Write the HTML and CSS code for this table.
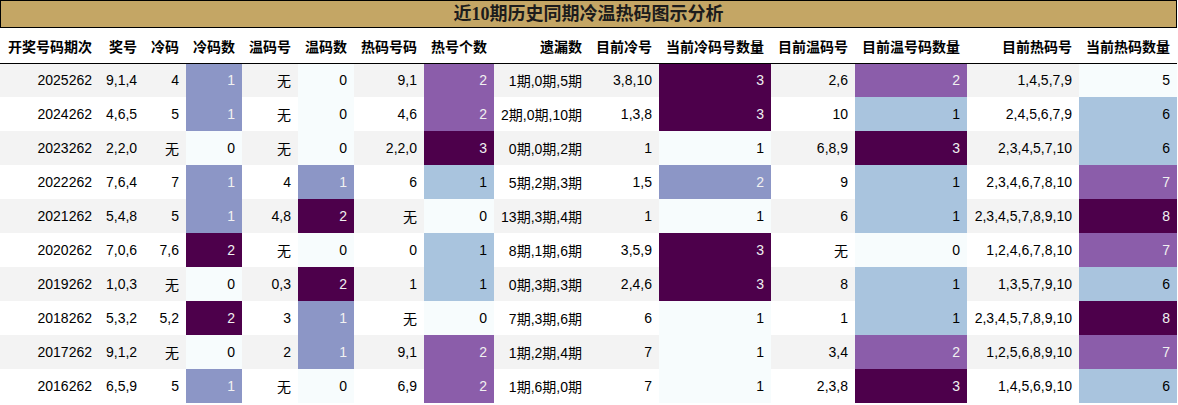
FILE: index.html
```html
<!DOCTYPE html>
<html lang="zh">
<head>
<meta charset="utf-8">
<title>近10期历史同期冷温热码图示分析</title>
<link rel="stylesheet" href="styles.css">
</head>
<body>
<div class="wrap">
  <div class="title">近10期历史同期冷温热码图示分析</div>
  <table class="grid">
    <colgroup>
      <col class="w99"><col class="w45"><col class="w42"><col class="w56"><col class="w56"><col class="w56"><col class="w70"><col class="w70"><col class="w95"><col class="w70"><col class="w112"><col class="w84"><col class="w112"><col class="w112"><col class="w98">
    </colgroup>
    <thead>
      <tr>
        <th>开奖号码期次</th><th>奖号</th><th>冷码</th><th>冷码数</th><th>温码号</th><th>温码数</th><th>热码号码</th><th>热号个数</th><th>遗漏数</th><th>目前冷号</th><th>当前冷码号数量</th><th>目前温码号</th><th>目前温号码数量</th><th>目前热码号</th><th>当前热码数量</th>
      </tr>
    </thead>
    <tbody>
      <tr class="odd">
        <td>2025262</td><td>9,1,4</td><td>4</td><td class="c-mid">1</td><td>无</td><td class="c-lo">0</td><td>9,1</td><td class="c-pu">2</td><td>1期,0期,5期</td><td>3,8,10</td><td class="c-dk">3</td><td>2,6</td><td class="c-pu">2</td><td>1,4,5,7,9</td><td class="c-lo">5</td>
      </tr>
      <tr>
        <td>2024262</td><td>4,6,5</td><td>5</td><td class="c-mid">1</td><td>无</td><td class="c-lo">0</td><td>4,6</td><td class="c-pu">2</td><td>2期,0期,10期</td><td>1,3,8</td><td class="c-dk">3</td><td>10</td><td class="c-lb">1</td><td>2,4,5,6,7,9</td><td class="c-lb">6</td>
      </tr>
      <tr class="odd">
        <td>2023262</td><td>2,2,0</td><td>无</td><td class="c-lo">0</td><td>无</td><td class="c-lo">0</td><td>2,2,0</td><td class="c-dk">3</td><td>0期,0期,2期</td><td>1</td><td class="c-lo">1</td><td>6,8,9</td><td class="c-dk">3</td><td>2,3,4,5,7,10</td><td class="c-lb">6</td>
      </tr>
      <tr>
        <td>2022262</td><td>7,6,4</td><td>7</td><td class="c-mid">1</td><td>4</td><td class="c-mid">1</td><td>6</td><td class="c-lb">1</td><td>5期,2期,3期</td><td>1,5</td><td class="c-mid">2</td><td>9</td><td class="c-lb">1</td><td>2,3,4,6,7,8,10</td><td class="c-pu">7</td>
      </tr>
      <tr class="odd">
        <td>2021262</td><td>5,4,8</td><td>5</td><td class="c-mid">1</td><td>4,8</td><td class="c-dk">2</td><td>无</td><td class="c-lo">0</td><td>13期,3期,4期</td><td>1</td><td class="c-lo">1</td><td>6</td><td class="c-lb">1</td><td>2,3,4,5,7,8,9,10</td><td class="c-dk">8</td>
      </tr>
      <tr>
        <td>2020262</td><td>7,0,6</td><td>7,6</td><td class="c-dk">2</td><td>无</td><td class="c-lo">0</td><td>0</td><td class="c-lb">1</td><td>8期,1期,6期</td><td>3,5,9</td><td class="c-dk">3</td><td>无</td><td class="c-lo">0</td><td>1,2,4,6,7,8,10</td><td class="c-pu">7</td>
      </tr>
      <tr class="odd">
        <td>2019262</td><td>1,0,3</td><td>无</td><td class="c-lo">0</td><td>0,3</td><td class="c-dk">2</td><td>1</td><td class="c-lb">1</td><td>0期,3期,3期</td><td>2,4,6</td><td class="c-dk">3</td><td>8</td><td class="c-lb">1</td><td>1,3,5,7,9,10</td><td class="c-lb">6</td>
      </tr>
      <tr>
        <td>2018262</td><td>5,3,2</td><td>5,2</td><td class="c-dk">2</td><td>3</td><td class="c-mid">1</td><td>无</td><td class="c-lo">0</td><td>7期,3期,6期</td><td>6</td><td class="c-lo">1</td><td>1</td><td class="c-lb">1</td><td>2,3,4,5,7,8,9,10</td><td class="c-dk">8</td>
      </tr>
      <tr class="odd">
        <td>2017262</td><td>9,1,2</td><td>无</td><td class="c-lo">0</td><td>2</td><td class="c-mid">1</td><td>9,1</td><td class="c-pu">2</td><td>1期,2期,4期</td><td>7</td><td class="c-lo">1</td><td>3,4</td><td class="c-pu">2</td><td>1,2,5,6,8,9,10</td><td class="c-pu">7</td>
      </tr>
      <tr>
        <td>2016262</td><td>6,5,9</td><td>5</td><td class="c-mid">1</td><td>无</td><td class="c-lo">0</td><td>6,9</td><td class="c-pu">2</td><td>1期,6期,0期</td><td>7</td><td class="c-lo">1</td><td>2,3,8</td><td class="c-dk">3</td><td>1,4,5,6,9,10</td><td class="c-lb">6</td>
      </tr>
    </tbody>
  </table>
</div>
</body>
</html>
```
FILE: styles.css
```css
html, body {
  margin: 0;
  padding: 0;
  background: #ffffff;
}

.wrap {
  width: 1177px;
  font-family: "Liberation Sans", "Noto Sans CJK SC", sans-serif;
  font-size: 14px;
  color: #000000;
}

.title {
  box-sizing: border-box;
  height: 28px;
  border: 1px solid #000000;
  background: #c4a665;
  color: #1c1c1c;
  font-family: "Liberation Serif", "Noto Sans CJK SC", serif;
  font-weight: bold;
  font-size: 18px;
  line-height: 26px;
  text-align: center;
}

.grid {
  width: 1177px;
  table-layout: fixed;
  border-collapse: collapse;
  border-spacing: 0;
}

.w42 { width: 42px; }
.w45 { width: 45px; }
.w56 { width: 56px; }
.w70 { width: 70px; }
.w84 { width: 84px; }
.w95 { width: 95px; }
.w98 { width: 98px; }
.w99 { width: 99px; }
.w112 { width: 112px; }

.grid th {
  height: 35px;
  padding: 2px 7px 0 7px;
  box-sizing: border-box;
  text-align: right;
  font-weight: bold;
  white-space: nowrap;
  border-bottom: 1px solid #000000;
  background: #ffffff;
}

.grid td {
  height: 34px;
  padding: 0 7px;
  box-sizing: border-box;
  text-align: right;
  white-space: nowrap;
  vertical-align: middle;
}

.grid tr.odd td {
  background: #f3f3f3;
}

.grid tr td.c-lo { background: #f7fcfd; color: #000000; }
.grid tr td.c-lb { background: #a9c4de; color: #000000; }
.grid tr td.c-mid { background: #8c96c6; color: #f1f1f1; }
.grid tr td.c-pu { background: #8b5daa; color: #f1f1f1; }
.grid tr td.c-dk { background: #4d004b; color: #f1f1f1; }
```
